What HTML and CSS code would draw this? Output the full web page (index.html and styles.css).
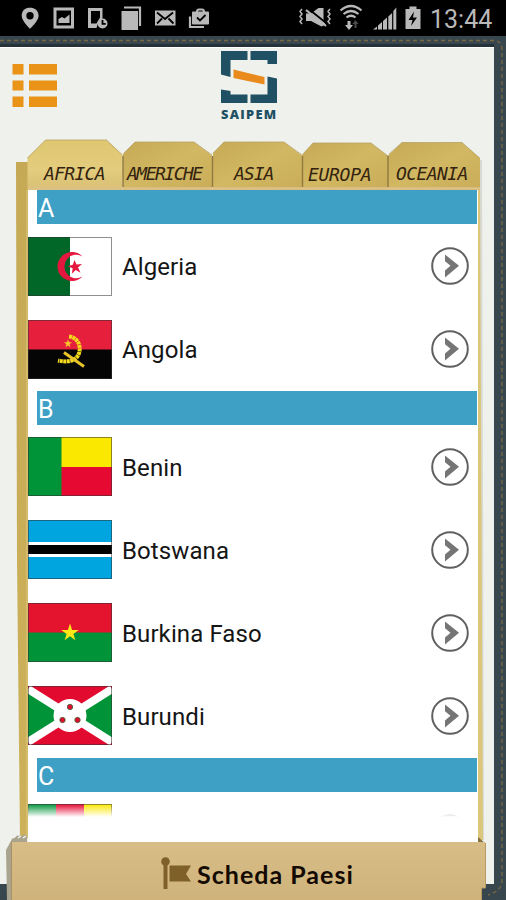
FILE: index.html
```html
<!DOCTYPE html>
<html lang="it">
<head>
<meta charset="utf-8">
<title>Scheda Paesi</title>
<link rel="stylesheet" href="styles.css">
</head>
<body>
<div class="screen">
  <div class="statusbar">
    <div class="status-icons">
      <svg width="34" height="36" viewBox="13 0 34 36"><path fill-rule="evenodd" d="M30 7.500c-5 0-8.300 3.600-8.300 8.200 0 5.500 8.300 13 8.300 13s8.600-7.500 8.600-13c0-4.600-3.600-8.200-8.600-8.200zm0 4.600a3.700 3.700 0 1 1 0 7.400 3.700 3.700 0 0 1 0-7.400z"/></svg>
      <svg width="34" height="36" viewBox="47 0 34 36"><path fill-rule="evenodd" d="M53.500 7.500h20.500v21H53.500zM56.500 10.500v15h14.500v-15z"/><path d="M58.500 23v-4l3.500-2 2.500 1.500 5-4V23z"/></svg>
      <svg width="31" height="36" viewBox="81 0 31 36"><path fill-rule="evenodd" d="M88 8h14.500v10.500l-4 3-2 6.500H88zM91 11v12.500h5.500l3.500-6V11z"/><circle cx="102.500" cy="23.500" r="5"/><path class="cut" d="M102.500 20v3.800h3.200"/></svg>
      <svg width="36" height="36" viewBox="112 0 36 36"><path d="M121.500 11H138v19h-16.500z"/><path class="line" d="M124 7.500h16v18.500"/></svg>
      <svg width="34" height="36" viewBox="148 0 34 36"><path d="M155 10.500h20.500v15H155z"/><path class="cut" d="m157 12.500 8 6.500 8-6.500M157 23.500l5-5M173.500 23.500l-5-5"/></svg>
      <svg width="34" height="36" viewBox="182 0 34 36"><path d="M193 12.500h15v11h-15z" stroke="#b9b9b9" stroke-width="2" stroke-linejoin="round"/><path class="line" d="M197 12q0-2.500 2-2.500h3q2 0 2 2.500M190 16.500v10.500h14"/><path class="cut" d="m197 17.500 3 3 5.500-5.500"/></svg>
    </div>
    <div class="status-info">
      <svg width="39" height="36" viewBox="297 0 39 36"><path d="M306 13.500h5l7.500-5.500h5v12l2 4.500-4 2-10.500-5.500h-5z"/><path class="cut" d="m308 8.500 20 16"/><path class="line" d="m306 10 20 16"/><path class="line thin" d="m302 9-2 2.500 2 2.500-2 2.500 2 2.500-2 2.500 2 2.500M330 9l-2 2.500 2 2.500-2 2.500 2 2.500-2 2.500 2 2.500"/></svg>
      <svg width="34" height="36" viewBox="336 0 34 36"><path class="line" d="M340.500 10.500q10.500-9 21 0M343.500 14q7.500-6 15 0M346.500 17.500q4.500-3.500 9 0"/><path d="M347.500 21h3v4h2.500l-4 5-4-5h2.500z"/><path fill="#4a4a4a" d="m355.500 20 3 4h-2v4h-2v-4h-2z"/></svg>
      <svg width="32" height="36" viewBox="370 0 32 36"><path d="M373 29.500l4-3v3zM378 25.500l4-3.500v7.500h-4zM383 21l4-3.500v12h-4zM388.300 16.500l3.800-3.500v16.500h-3.800zM393.300 11l3-3.500v22h-3z"/></svg>
      <svg width="27" height="36" viewBox="402 0 27 36"><path d="M405.500 9h4V6.500h7V9h4v20h-15z"/><path d="m414 11.500-5.500 8.500h4l-1.500 6 6-8.500h-4z" fill="#000"/></svg>
      <span class="clock">13:44</span>
    </div>
  </div>

  <div class="stage">
    <svg class="backdrop" width="506" height="864" viewBox="0 36 506 864">
      <defs>
        <linearGradient id="tabOn" x1="0" y1="0" x2="0" y2="1"><stop offset="0" stop-color="#dfc671"/><stop offset=".6" stop-color="#e3cc7d"/><stop offset="1" stop-color="#d9bf74"/></linearGradient>
        <linearGradient id="tabOff" x1="0" y1="0" x2="1" y2="1"><stop offset="0" stop-color="#c6a955"/><stop offset=".5" stop-color="#d2b862"/><stop offset="1" stop-color="#c9ac58"/></linearGradient>
        <linearGradient id="edge" x1="0" y1="0" x2="0" y2="1"><stop offset="0" stop-color="#c5a955"/><stop offset="1" stop-color="#cdb15a"/></linearGradient>
      </defs>
      <rect y="36" width="506" height="864" fill="#38474e"/>
      <path d="M0 40.500h495q7 1 7 9V880q0 11-14 15" fill="none" stroke="#7b6742" stroke-width="1.300" stroke-dasharray="4 3"/>
      <rect y="44" width="494" height="3" fill="#263239"/>
      <rect y="47" width="494" height="837" fill="#eff1ed"/>
      <path d="M0 47.500h494" stroke="#fff"/>
      <path d="M480 160l2 680" stroke="#d8dad5" stroke-width="4"/>
      <path d="M16 162h14v676H20L17 560z" fill="url(#edge)"/>
      <path d="M27 190v648" stroke="#e0c97f"/>
      <path d="M477 186h3l3 654h-6z" fill="#dcc67a"/>
      <path d="M388 190V155.500L402 142.500h60l18 15.500V190z" fill="url(#tabOff)"/>
      <path d="M302 190V155l11-12h58l17 13v34z" fill="url(#tabOff)"/>
      <path d="M213 190V153.500L224 142h60l18 13.500V190z" fill="url(#tabOff)"/>
      <path d="M123 190V154l12-12h59l18 13.500V190z" fill="url(#tabOff)"/>
      <path d="M27.500 190V157.500L45.500 140h61l16 15v35z" fill="url(#tabOn)"/>
      <path d="M27.500 158 45.500 140h61l16 15M124 153l11-11h59l18 13M213 153l11-11h60l18 13M303 154l10-11h58l17 13M389 154l13-11.500h60l18 16" fill="none" stroke="#b7a36a" stroke-width=".8"/>
      <path d="M123 156v31M212.500 156v31M302.500 156v31M388 156v31" stroke="#8f7941" stroke-width="1.400"/>
      <path d="M28 188.500h452" stroke="#dcc18a" stroke-width="2.500"/>
    </svg>

    <header class="topbar">
      <svg class="menu" width="46" height="45" viewBox="0 0 46 45"><path fill="#e99419" d="M.5 1h11v10.500H.5zM17 1h28v10.500H17zM.5 17.500h11v10H.5zM17 17.500h28v10H17zM.5 33.500h11V44H.5zM17 33.500h28V44H17z"/></svg>
      <div class="logo">
        <svg width="56" height="52" viewBox="0 0 56 52"><path fill="#1f5063" d="M0 0h26.500v9H9.500v17L0 23.500zM29.500 0H56v13h-9.500V9h-17zM0 38.500l9.500 1.500v3.500h17V52H0zM29.500 43.500h17v-18L56 27.500V52H29.500z"/><path fill="#e98a1d" d="M12.500 18.500 43.500 26v7.500L12.500 27z"/></svg>
        <span class="brand">SAIPEM</span>
      </div>
    </header>

    <nav class="tabs">
      <span class="tab africa">AFRICA</span>
      <span class="tab americhe">AMERICHE</span>
      <span class="tab asia">ASIA</span>
      <span class="tab europa">EUROPA</span>
      <span class="tab oceania">OCEANIA</span>
    </nav>

    <main class="list">
      <section class="group first">
        <h2>A</h2>
        <div class="row">
          <svg class="flag" viewBox="0 0 84 59"><rect width="84" height="59" fill="#fff"/><rect width="42" height="59" fill="#006729"/><path fill="#e4173e" d="M54.500 19.500A14.500 14.500 0 1 0 54.500 39.500 11.800 11.800 0 1 1 54.500 19.500z"/><path fill="#e4173e" d="m46.500 23 2 4.600 5.500-.6-4 3.500 2.500 5.200-4.800-2.700-3.900 3.700.9-5.500-5.200-2 5.300-1.500z"/><rect class="frame" x=".5" y=".5" width="83" height="58"/></svg>
          <span class="name">Algeria</span>
          <svg class="go" viewBox="0 0 38 38"><circle cx="19" cy="19" r="17.800"/><path d="m14 7.500 14 11.200L14 30.500v-7l5.500-4.800L14 14.200z"/></svg>
        </div>
        <div class="row">
          <svg class="flag" viewBox="0 0 84 59"><rect width="84" height="30" fill="#e51f3c"/><rect y="29.500" width="84" height="29.500" fill="#050505"/><path d="M41 16.500C53 18 54 32 48.500 37.500 44 42 37 42 30 40.500" fill="none" stroke="#f5d91c" stroke-width="4" stroke-dasharray="3 .5"/><path d="M36 32.500 56 46.500" stroke="#e8c32a" stroke-width="3"/><path fill="#f9c52b" d="m40 19.500 1 2.800 3 0-2.400 1.900.9 3-2.500-1.800-2.500 1.800.9-3-2.400-1.900h3z"/><rect class="frame" x=".5" y=".5" width="83" height="58"/></svg>
          <span class="name">Angola</span>
          <svg class="go" viewBox="0 0 38 38"><circle cx="19" cy="19" r="17.800"/><path d="m14 7.500 14 11.200L14 30.500v-7l5.500-4.800L14 14.200z"/></svg>
        </div>
      </section>
      <section class="group second">
        <h2>B</h2>
        <div class="row">
          <svg class="flag" viewBox="0 0 84 59"><rect width="84" height="59" fill="#009438"/><rect x="33.500" width="51" height="30" fill="#fbe800"/><rect x="33.500" y="30" width="51" height="29" fill="#e60a32"/><rect class="frame" x=".5" y=".5" width="83" height="58"/></svg>
          <span class="name">Benin</span>
          <svg class="go" viewBox="0 0 38 38"><circle cx="19" cy="19" r="17.800"/><path d="m14 7.500 14 11.200L14 30.500v-7l5.500-4.800L14 14.200z"/></svg>
        </div>
        <div class="row">
          <svg class="flag" viewBox="0 0 84 59"><rect width="84" height="59" fill="#00a5df"/><rect y="22" width="84" height="15" fill="#fff"/><rect y="25" width="84" height="9" fill="#000"/><rect class="frame" x=".5" y=".5" width="83" height="58"/></svg>
          <span class="name">Botswana</span>
          <svg class="go" viewBox="0 0 38 38"><circle cx="19" cy="19" r="17.800"/><path d="m14 7.500 14 11.200L14 30.500v-7l5.500-4.800L14 14.200z"/></svg>
        </div>
        <div class="row">
          <svg class="flag" viewBox="0 0 84 59"><rect width="84" height="30" fill="#e4132e"/><rect y="29.500" width="84" height="29.500" fill="#009338"/><path fill="#fce816" d="m42 20.500 2.100 6.400h6.700l-5.400 4 2 6.300-5.400-3.900-5.400 3.900 2-6.300-5.400-4h6.700z"/><rect class="frame" x=".5" y=".5" width="83" height="58"/></svg>
          <span class="name">Burkina Faso</span>
          <svg class="go" viewBox="0 0 38 38"><circle cx="19" cy="19" r="17.800"/><path d="m14 7.500 14 11.200L14 30.500v-7l5.500-4.800L14 14.200z"/></svg>
        </div>
        <div class="row">
          <svg class="flag" viewBox="0 0 84 59"><rect width="84" height="59" fill="#e30a2f"/><path d="M0 3l42 26.500L0 56zM84 3 42 29.500 84 56z" fill="#009338"/><path d="M0 3l84 53M84 3 0 56" stroke="#fff" stroke-width="8"/><circle cx="42" cy="29.500" r="16.500" fill="#fff"/><g fill="#e30a2f" stroke="#3a6b35" stroke-width=".8"><circle cx="42" cy="21" r="2.700"/><circle cx="34.500" cy="34" r="2.700"/><circle cx="49.500" cy="34" r="2.700"/></g><rect class="frame" x=".5" y=".5" width="83" height="58"/></svg>
          <span class="name">Burundi</span>
          <svg class="go" viewBox="0 0 38 38"><circle cx="19" cy="19" r="17.800"/><path d="m14 7.500 14 11.200L14 30.500v-7l5.500-4.800L14 14.200z"/></svg>
        </div>
      </section>
      <section class="group third">
        <h2>C</h2>
        <div class="row">
          <svg class="flag" viewBox="0 0 84 59"><rect width="84" height="59" fill="#009438"/><rect x="28" width="28" height="59" fill="#e60a32"/><rect x="56" width="28" height="59" fill="#fbe800"/><rect class="frame" x=".5" y=".5" width="83" height="58"/></svg>
          <svg class="go" viewBox="0 0 38 38"><circle cx="19" cy="19" r="17.800"/></svg>
        </div>
      </section>
    </main>

    <footer class="footer">
      <svg class="folder" width="482" height="70" viewBox="6 830 482 70">
        <defs><linearGradient id="foot" x1="0" y1="0" x2="0" y2="1"><stop offset="0" stop-color="#d8bd87"/><stop offset="1" stop-color="#cfb37b"/></linearGradient></defs>
        <path d="M6 850l6-11 3-3 12-1v12l-14 53H7z" fill="#aaa48e"/>
        <path d="M13 838l3-2M18 838l3-2M23 838l3-2" stroke="#f5f5f5" stroke-width="1.500"/>
        <path d="M478 837l7 6v3h-8z" fill="#85703f"/>
        <path d="M11 842h474v46h-4v12H11z" fill="url(#foot)"/>
        <path d="M11.500 842v58" stroke="#a99163"/>
        <path d="M485.500 843v45h-4v12" fill="none" stroke="#b79b63"/>
      </svg>
      <svg class="pennant" width="30" height="34" viewBox="0 0 30 34"><g fill="#806029"><circle cx="4.500" cy="4.500" r="4.300"/><path d="M2.500 6h4v26h-4zM8.500 8.500H30L25 17l5 7.500H8.500z"/></g></svg>
      <span>Scheda Paesi</span>
    </footer>
  </div>
</div>
</body>
</html>
```
FILE: styles.css
```css
* { box-sizing: border-box; }
body { margin: 0; background: #000; font-family: Roboto, "Liberation Sans", sans-serif; }
.screen { width: 506px; height: 900px; overflow: hidden; display: flex; flex-direction: column; }

.statusbar { height: 36px; background: #000; display: flex; justify-content: space-between; padding-left: 13px; }
.statusbar svg { display: block; fill: #b9b9b9; }
.status-icons, .status-info { display: flex; }
.status-info { width: 209px; }
.line { fill: none; stroke: #b9b9b9; stroke-width: 2.2; }
.thin { stroke-width: 1.5; }
.cut { fill: none; stroke: #000; stroke-width: 1.8; }
.clock { color: #b9b9b9; font-size: 25px; line-height: 39px; padding-left: 1px; }

.stage { position: relative; height: 864px; display: flex; flex-direction: column; }
.backdrop { position: absolute; top: 0; left: 0; z-index: -1; }

.topbar { height: 104px; display: flex; align-items: flex-start; padding: 15px 0 0 12px; gap: 163px; }
.menu { margin-top: 12px; }
.logo { width: 56px; display: flex; flex-direction: column; }
.logo svg { display: block; }
.brand { font: 800 12.800px/15px "Open Sans", sans-serif; color: #1f5063; margin-top: 4px; letter-spacing: 1.3px; white-space: nowrap; }

.tabs { height: 50px; padding: 23px 26px 0 28px; display: grid; grid-template-columns: 95px 89px 89px 87px 92px; }
.tab { font: italic 18px/22px "DejaVu Sans Mono", monospace; color: #33230f; letter-spacing: -1px; white-space: nowrap; }
.africa { padding-left: 16px; letter-spacing: -.7px; }
.americhe { padding-left: 4px; letter-spacing: -1.500px; }
.asia { padding-left: 22px; }
.europa { padding-left: 7px; letter-spacing: -.3px; padding-top: 1px; }
.oceania { padding-left: 8px; letter-spacing: -.6px; }

.list { height: 652px; width: 450px; margin-left: 28px; background: #fff; overflow: hidden; }
.group h2 { margin: 0 1px 0 9px; padding-left: 1px; height: 34px; background: #3fa0c5; color: #fff; font-size: 25px; font-weight: 400; line-height: 38px; }
.first { padding-bottom: 1px; }
.first .flag { margin-top: 1px; }
.first .flag, .second .flag { flex-shrink: 0; }
.second { padding-bottom: 1px; }
.row { height: 83px; padding: 0 9.5px 0 0; display: flex; align-items: center; gap: 10px; }
.flag { width: 84px; height: 59px; display: block; }
.frame { fill: none; stroke: #333; stroke-opacity: .55; }
.name { font-size: 24px; letter-spacing: .1px; color: #151515; line-height: 30px; padding-top: 2px; }
.go { width: 38px; height: 38px; margin-left: auto; }
.go circle { fill: none; stroke: #606060; stroke-width: 2; }
.go path { fill: #757575; }
.third .row { height: 25px; padding-top: 12px; align-items: flex-start; overflow: hidden; -webkit-mask-image: linear-gradient(#000 12px, transparent 25px); mask-image: linear-gradient(#000 12px, transparent 25px); }
.third .go { margin-top: 10px; }
.third .row svg { flex-shrink: 0; }

.footer { position: relative; height: 58px; display: flex; align-items: center; padding-left: 161px; gap: 6px; font: 700 25px/32px Lato, sans-serif; letter-spacing: 1.02px; color: #120a03; padding-top: 6px; }
.folder { position: absolute; left: 6px; bottom: 0; z-index: -1; }
.footer span { white-space: nowrap; margin-top: -1px; }
```
